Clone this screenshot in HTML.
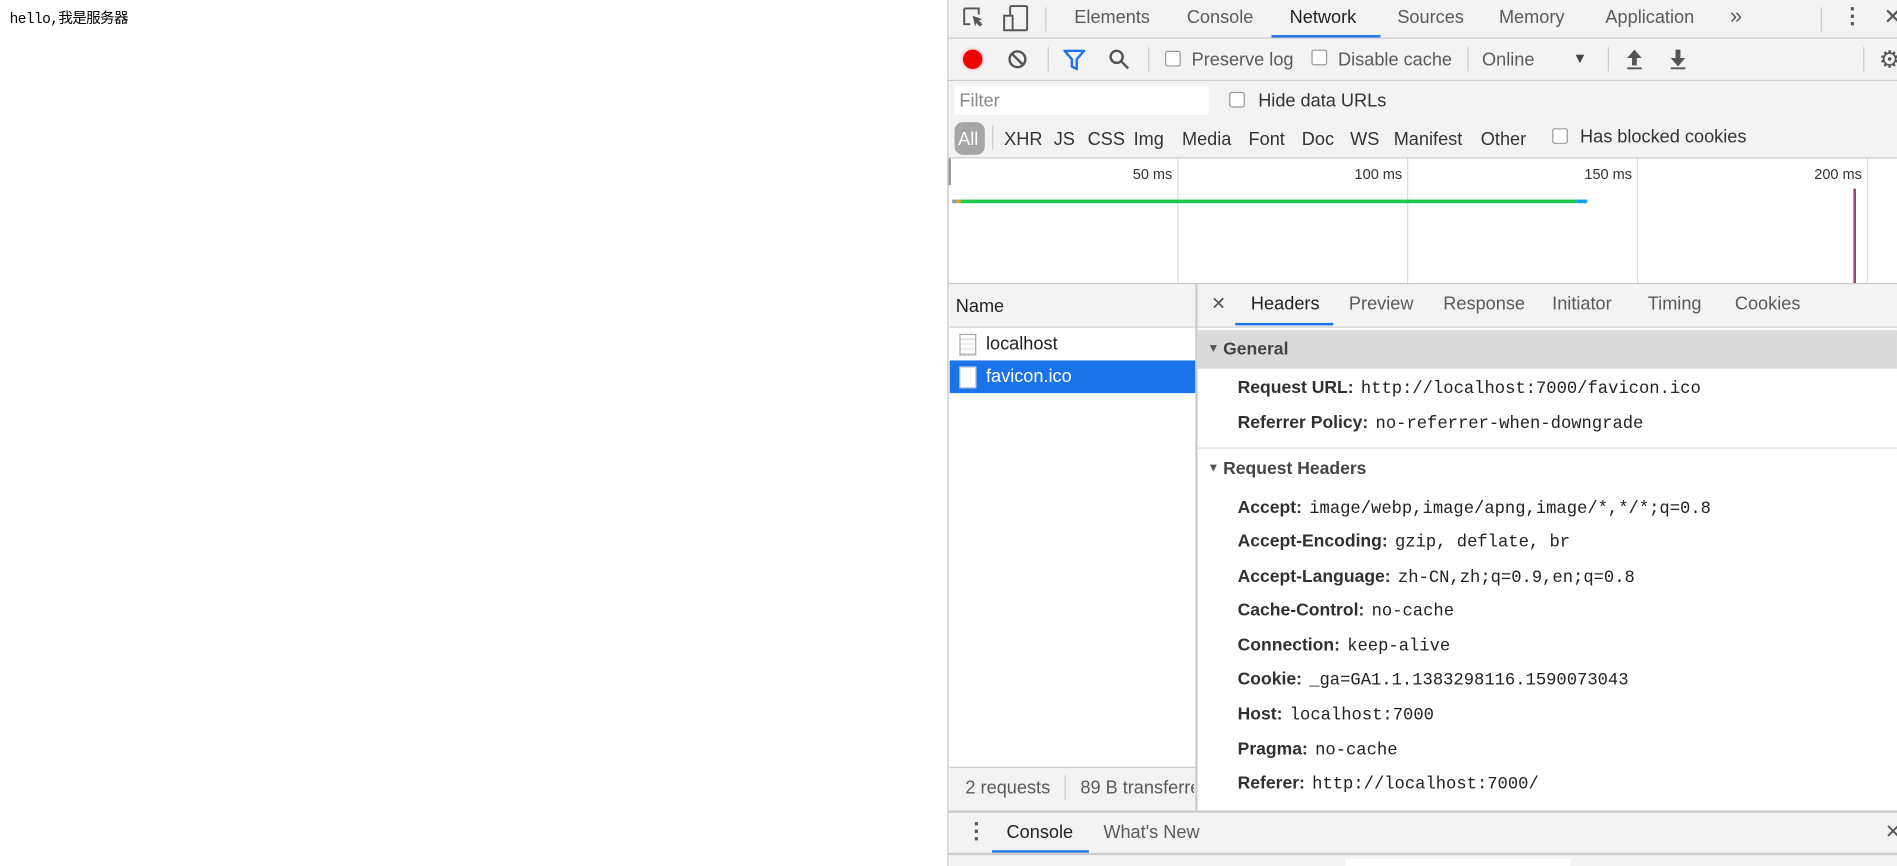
<!DOCTYPE html>
<html><head><meta charset="utf-8"><style>
*{margin:0;padding:0;box-sizing:border-box}
html,body{width:1897px;height:866px;overflow:hidden;background:#fff}
#w{position:absolute;left:0;top:0;width:1568px;height:716px;transform:scale(1.2098,1.2095);transform-origin:0 0;font-family:"Liberation Sans",sans-serif;color:#333}
.a{position:absolute;white-space:nowrap}
.t{font-size:15px;color:#333}
.g{color:#5a5a5a}
.cb{position:absolute;width:13px;height:13px;border:1px solid #999;border-radius:2px;background:#fff}
.vs{position:absolute;width:1px;background:#ccc}
.hs{position:absolute;height:1px;background:#cbcbcb}
.k{position:absolute;left:1023px;font-size:14.5px;font-weight:bold;color:#303030;white-space:nowrap}
.k span{font-weight:normal;font-family:"Liberation Mono",monospace;font-size:14.2px;color:#222;margin-left:6px}
</style></head><body><div id="w">
<div class="a" style="left:8px;top:6px;font-size:12px;font-family:'Liberation Mono','Noto Sans CJK SC',monospace;color:#000;letter-spacing:-0.5px">hello,我是服务器</div>

<div class="a" style="left:783px;top:0;width:785px;height:716px;background:#f3f3f3;border-left:1px solid #ccc"></div>
<svg class="a" style="left:795px;top:5px" width="20" height="20" viewBox="0 0 20 20"><path d="M2 2h12v5M2 2v13h5" fill="none" stroke="#555" stroke-width="1.6"/><path d="M9 8l8 3-3 1 3 3-2 2-3-3-1 3z" fill="#555"/></svg>
<svg class="a" style="left:829px;top:4px" width="22" height="22" viewBox="0 0 22 22"><rect x="6" y="1" width="14" height="20" rx="1" fill="none" stroke="#555" stroke-width="1.6"/><rect x="1" y="9" width="7" height="12" fill="#f3f3f3" stroke="#555" stroke-width="1.6"/></svg>
<div class="vs" style="left:864px;top:6px;height:20px"></div>
<div class="a t g" style="left:888px;top:6px">Elements</div>
<div class="a t g" style="left:981px;top:6px">Console</div>
<div class="a t" style="left:1066px;top:6px;color:#222">Network</div>
<div class="a" style="left:1051px;top:29px;width:90px;height:2px;background:#1a73e8"></div>
<div class="a t g" style="left:1155px;top:6px">Sources</div>
<div class="a t g" style="left:1239px;top:6px">Memory</div>
<div class="a t g" style="left:1327px;top:6px">Application</div>
<div class="a t g" style="left:1430px;top:3px;font-size:18px">»</div>
<div class="vs" style="left:1505px;top:6px;height:20px"></div>
<div class="a" style="left:1522px;top:3px;font-size:18px;color:#555;font-weight:bold">⋮</div>
<div class="a" style="left:1557px;top:4px;font-size:18px;color:#555">✕</div>
<div class="hs" style="left:784px;top:31px;width:784px"></div>
<div class="a" style="left:796px;top:41px;width:16px;height:16px;border-radius:50%;background:#e00;box-shadow:0 0 3px #f88"></div>
<svg class="a" style="left:833px;top:41px" width="16" height="16" viewBox="0 0 16 16"><circle cx="8" cy="8" r="6.5" fill="none" stroke="#555" stroke-width="2"/><path d="M3.5 3.5l9 9" stroke="#555" stroke-width="2"/></svg>
<div class="vs" style="left:866px;top:39px;height:20px"></div>
<svg class="a" style="left:879px;top:41px" width="18" height="17" viewBox="0 0 18 17"><path d="M1 1h16l-6 7v8l-4-2v-6z" fill="none" stroke="#1a73e8" stroke-width="2"/></svg>
<svg class="a" style="left:916px;top:40px" width="18" height="18" viewBox="0 0 18 18"><circle cx="7" cy="7" r="5" fill="none" stroke="#555" stroke-width="2"/><path d="M10.5 10.5l6 6" stroke="#555" stroke-width="2"/></svg>
<div class="vs" style="left:949px;top:39px;height:20px"></div>
<div class="cb" style="left:963px;top:42px"></div>
<div class="a t g" style="left:985px;top:41px">Preserve log</div>
<div class="cb" style="left:1084px;top:41px"></div>
<div class="a t g" style="left:1106px;top:41px">Disable cache</div>
<div class="vs" style="left:1213px;top:39px;height:20px"></div>
<div class="a t g" style="left:1225px;top:41px">Online</div>
<div class="a" style="left:1300px;top:41px;font-size:12px;color:#444">▼</div>
<div class="vs" style="left:1329px;top:39px;height:20px"></div>
<svg class="a" style="left:1343px;top:40px" width="16" height="18" viewBox="0 0 16 18"><path d="M8 1l6 7h-4v6H6V8H2z" fill="#555"/><path d="M2 16.5h12" stroke="#555" stroke-width="1.5"/></svg>
<svg class="a" style="left:1379px;top:40px" width="16" height="18" viewBox="0 0 16 18"><path d="M8 15l6-7h-4V1H6v7H2z" fill="#555"/><path d="M2 16.5h12" stroke="#555" stroke-width="1.5"/></svg>
<div class="vs" style="left:1540px;top:39px;height:20px"></div>
<div class="a" style="left:1553px;top:37px;font-size:20px;color:#555">⚙</div>
<div class="hs" style="left:784px;top:66px;width:784px"></div>
<div class="a" style="left:789px;top:71px;width:210px;height:24px;background:#fff"></div>
<div class="a t" style="left:793px;top:75px;color:#888">Filter</div>
<div class="cb" style="left:1016px;top:76px"></div>
<div class="a t" style="left:1040px;top:75px">Hide data URLs</div>
<div class="a" style="left:789px;top:101px;width:25px;height:27px;border-radius:7px;background:#a6a6a6"></div>
<div class="a t" style="left:792px;top:107px;color:#fff">All</div>
<div class="vs" style="left:820px;top:104px;height:20px"></div>
<div class="a t" style="left:830px;top:107px">XHR</div>
<div class="a t" style="left:871px;top:107px">JS</div>
<div class="a t" style="left:899px;top:107px">CSS</div>
<div class="a t" style="left:937px;top:107px">Img</div>
<div class="a t" style="left:977px;top:107px">Media</div>
<div class="a t" style="left:1032px;top:107px">Font</div>
<div class="a t" style="left:1076px;top:107px">Doc</div>
<div class="a t" style="left:1116px;top:107px">WS</div>
<div class="a t" style="left:1152px;top:107px">Manifest</div>
<div class="a t" style="left:1224px;top:107px">Other</div>
<div class="cb" style="left:1283px;top:106px"></div>
<div class="a t" style="left:1306px;top:105px">Has blocked cookies</div>
<div class="hs" style="left:784px;top:130px;width:784px"></div>
<div class="a" style="left:785px;top:131px;width:783px;height:103px;background:#fff"></div>
<div class="a" style="left:784px;top:131px;width:2px;height:22px;background:#999"></div>
<div class="vs" style="left:973px;top:131px;height:103px;background:#ddd"></div>
<div class="vs" style="left:1163px;top:131px;height:103px;background:#ddd"></div>
<div class="vs" style="left:1353px;top:131px;height:103px;background:#ddd"></div>
<div class="vs" style="left:1543px;top:131px;height:103px;background:#ddd"></div>
<div class="a" style="left:900px;top:137px;width:69px;text-align:right;font-size:12px;color:#333">50 ms</div>
<div class="a" style="left:1090px;top:137px;width:69px;text-align:right;font-size:12px;color:#333">100 ms</div>
<div class="a" style="left:1280px;top:137px;width:69px;text-align:right;font-size:12px;color:#333">150 ms</div>
<div class="a" style="left:1470px;top:137px;width:69px;text-align:right;font-size:12px;color:#333">200 ms</div>
<div class="a" style="left:787px;top:165px;width:4px;height:3px;background:#999"></div>
<div class="a" style="left:791px;top:165px;width:3px;height:3px;background:#f90"></div>
<div class="a" style="left:794px;top:165px;width:509px;height:3px;background:#1ec84a"></div>
<div class="a" style="left:1303px;top:165px;width:9px;height:3px;background:#1a9cf0"></div>
<div class="a" style="left:1532px;top:156px;width:1px;height:78px;background:#d33"></div>
<div class="a" style="left:1533px;top:156px;width:1px;height:78px;background:#33c"></div>
<div class="hs" style="left:784px;top:234px;width:784px"></div>
<div class="a" style="left:785px;top:236px;width:203px;height:34px;background:#f3f3f3"></div>
<div class="a t" style="left:790px;top:245px;color:#222">Name</div>
<div class="hs" style="left:785px;top:270px;width:203px"></div>
<div class="a" style="left:785px;top:271px;width:203px;height:363px;background:#fff"></div>
<div class="a" style="left:785px;top:298px;width:203px;height:27px;background:#1a73e8"></div>
<div class="a" style="left:793px;top:276px;width:14px;height:18px;border:1px solid #aaa;background:repeating-linear-gradient(#fff 0 3px,#ddd 3px 4px)"></div>
<div class="a t" style="left:815px;top:276px;color:#222">localhost</div>
<div class="a" style="left:793px;top:303px;width:14px;height:18px;border:1px solid #ccc;background:#fff"></div>
<div class="a t" style="left:815px;top:303px;color:#fff">favicon.ico</div>
<div class="hs" style="left:785px;top:634px;width:203px"></div>
<div class="vs" style="left:880px;top:641px;height:20px"></div>
<div class="a t g" style="left:798px;top:643px">2 requests</div>
<div class="a t g" style="left:893px;top:643px;width:94px;overflow:hidden">89 B transferred</div>
<div class="a" style="left:988px;top:235px;width:2px;height:435px;background:#ccc"></div>
<div class="a" style="left:990px;top:236px;width:578px;height:34px;background:#f3f3f3"></div>
<div class="a" style="left:1001px;top:242px;font-size:15px;color:#555">✕</div>
<div class="a t" style="left:1034px;top:243px;color:#222">Headers</div>
<div class="a" style="left:1021px;top:267px;width:81px;height:2px;background:#1a73e8"></div>
<div class="a t g" style="left:1115px;top:243px">Preview</div>
<div class="a t g" style="left:1193px;top:243px">Response</div>
<div class="a t g" style="left:1283px;top:243px">Initiator</div>
<div class="a t g" style="left:1362px;top:243px">Timing</div>
<div class="a t g" style="left:1434px;top:243px">Cookies</div>
<div class="hs" style="left:990px;top:270px;width:578px"></div>
<div class="a" style="left:990px;top:271px;width:578px;height:399px;background:#fff"></div>
<div class="a" style="left:990px;top:273px;width:578px;height:32px;background:#dadada"></div>
<div class="a" style="left:998px;top:283px;font-size:10px;color:#555">▼</div>
<div class="a" style="left:1011px;top:281px;font-size:14.5px;font-weight:bold;color:#444">General</div>
<div class="k" style="top:313px">Request URL:<span>http://localhost:7000/favicon.ico</span></div>
<div class="k" style="top:342px">Referrer Policy:<span>no-referrer-when-downgrade</span></div>
<div class="hs" style="left:990px;top:370px;width:578px;background:#ddd"></div>
<div class="a" style="left:998px;top:382px;font-size:10px;color:#555">▼</div>
<div class="a" style="left:1011px;top:380px;font-size:14.5px;font-weight:bold;color:#444">Request Headers</div>
<div class="k" style="top:412px">Accept:<span>image/webp,image/apng,image/*,*/*;q=0.8</span></div>
<div class="k" style="top:440px">Accept-Encoding:<span>gzip, deflate, br</span></div>
<div class="k" style="top:469px">Accept-Language:<span>zh-CN,zh;q=0.9,en;q=0.8</span></div>
<div class="k" style="top:497px">Cache-Control:<span>no-cache</span></div>
<div class="k" style="top:526px">Connection:<span>keep-alive</span></div>
<div class="k" style="top:554px">Cookie:<span>_ga=GA1.1.1383298116.1590073043</span></div>
<div class="k" style="top:583px">Host:<span>localhost:7000</span></div>
<div class="k" style="top:612px">Pragma:<span>no-cache</span></div>
<div class="k" style="top:640px">Referer:<span>http://localhost:7000/</span></div>
<div class="hs" style="left:784px;top:670px;width:784px;height:2px"></div>
<div class="a" style="left:798px;top:677px;font-size:18px;color:#555;font-weight:bold">⋮</div>
<div class="a t" style="left:832px;top:680px;color:#222">Console</div>
<div class="a" style="left:820px;top:703px;width:80px;height:2px;background:#1a73e8"></div>
<div class="a t g" style="left:912px;top:680px">What's New</div>
<div class="a" style="left:1558px;top:678px;font-size:16px;color:#555">✕</div>
<div class="hs" style="left:784px;top:705px;width:784px;height:2px"></div>
<div class="a" style="left:1112px;top:710px;width:186px;height:6px;background:#fff"></div>
</div></body></html>
